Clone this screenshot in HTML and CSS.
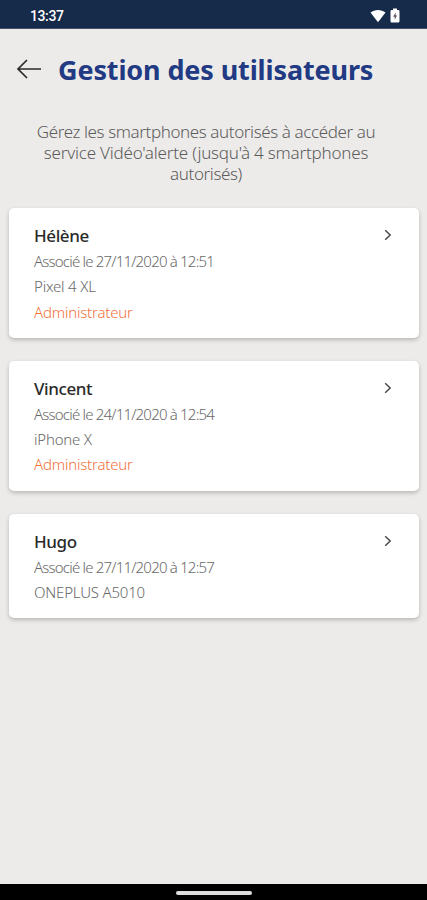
FILE: index.html
```html
<!DOCTYPE html>
<html lang="fr">
<head>
  <meta charset="UTF-8" />
  <meta name="viewport" content="width=device-width, initial-scale=1.0" />
  <title>Gestion des utilisateurs</title>
  <link rel="stylesheet" href="styles.css">
</head>
<body>
  <div class="status-bar">
    <span class="time">13:37</span>
    <div class="status-icons">
      <svg width="16" height="14" viewBox="0 0 16 14"><path d="M0.5 3.6C4.8 0 11.2 0 15.5 3.6L8 13.2Z" fill="#fff"/></svg>
      <svg width="10" height="15" viewBox="0 0 10 15"><path d="M3 0.5h4v1.5h1.2q1.3 0 1.3 1.3v9.9q0 1.3-1.3 1.3H1.8q-1.3 0-1.3-1.3V3.3Q0.5 2 1.8 2H3z" fill="#fff"/><path d="M5.6 4.5L3.2 8.8h1.5v3L7 7.6H5.6z" fill="#5c5560"/></svg>
    </div>
  </div>

  <header class="header">
    <a class="back" href="#" aria-label="Retour">
      <svg width="26" height="22" viewBox="0 0 26 22" fill="none" stroke="#2b2b2b" stroke-width="1.7"><path d="M25 11H2M11 2L2 11L11 20"/></svg>
    </a>
    <h1>Gestion des utilisateurs</h1>
  </header>

  <p class="intro">
    <span class="intro-line first">Gérez les smartphones autorisés à accéder au</span>
    <span class="intro-line second">service Vidéo'alerte (jusqu'à 4 smartphones</span>
    <span class="intro-line third">autorisés)</span>
  </p>

  <main class="users">
    <a class="card" href="#">
      <div class="info">
        <h2>Hélène</h2>
        <p class="date">Associé le 27/11/2020 à 12:51</p>
        <p class="device">Pixel 4 XL</p>
        <p class="role">Administrateur</p>
      </div>
      <svg class="chevron" width="8" height="12" viewBox="0 0 8 12"><path d="M1.2 1.2L6.2 6L1.2 10.8"/></svg>
    </a>

    <a class="card" href="#">
      <div class="info">
        <h2>Vincent</h2>
        <p class="date">Associé le 24/11/2020 à 12:54</p>
        <p class="device">iPhone X</p>
        <p class="role">Administrateur</p>
      </div>
      <svg class="chevron" width="8" height="12" viewBox="0 0 8 12"><path d="M1.2 1.2L6.2 6L1.2 10.8"/></svg>
    </a>

    <a class="card" href="#">
      <div class="info">
        <h2>Hugo</h2>
        <p class="date">Associé le 27/11/2020 à 12:57</p>
        <p class="device">ONEPLUS A5010</p>
      </div>
      <svg class="chevron" width="8" height="12" viewBox="0 0 8 12"><path d="M1.2 1.2L6.2 6L1.2 10.8"/></svg>
    </a>
  </main>

  <footer class="nav-bar">
    <div class="nav-handle"></div>
  </footer>
</body>
</html>
```

FILE: styles.css
```css
* {
  box-sizing: border-box;
}
body {
  margin: 0;
  height: 900px;
  display: flex;
  flex-direction: column;
  background: #ecebe9;
  font-family: "Noto Sans", "Open Sans", sans-serif;
  overflow: hidden;
}
h1, h2, p {
  margin: 0;
}
.status-bar {
  height: 29px;
  display: flex;
  justify-content: space-between;
  align-items: center;
  padding: 3px 27px 0 30px;
  background: #162a49;
  border-bottom: 1px solid #4a5068;
}
.time {
  font-family: Roboto, sans-serif;
  font-size: 14px;
  font-weight: 500;
  letter-spacing: -0.4px;
  color: #fff;
}
.status-icons {
  display: flex;
  align-items: center;
  gap: 4px;
}
.header {
  display: flex;
  align-items: center;
  height: 80px;
  padding-left: 16px;
}
.back {
  display: flex;
  margin-right: 16px;
}
.header h1 {
  padding-top: 1px;
  font-size: 27px;
  font-weight: 700;
  line-height: 36px;
  letter-spacing: -0.13px;
  color: #213a83;
  white-space: nowrap;
}
.intro {
  margin-top: 12px;
  padding-right: 15px;
  text-align: center;
  font-size: 17px;
  font-weight: 300;
  line-height: 21px;
  letter-spacing: -0.4px;
  color: #5c5c5c;
}
.intro-line {
  display: block;
  white-space: nowrap;
}
.intro-line.second {
  letter-spacing: -0.2px;
}
.users {
  flex: 1;
  display: flex;
  flex-direction: column;
  gap: 23px;
  padding: 24px 8px 0 9px;
}
.card {
  display: flex;
  justify-content: space-between;
  padding: 14px 27px 13px 25px;
  background: #fff;
  border-radius: 5px;
  box-shadow: 0 2px 4px rgba(0, 0, 0, 0.22);
  text-decoration: none;
}
.info h2 {
  font-size: 17px;
  font-weight: 500;
  line-height: 27px;
  letter-spacing: -0.4px;
  color: #2a2a2a;
}
.info p {
  font-size: 15px;
  font-weight: 300;
  line-height: 25.3px;
  letter-spacing: -0.2px;
  color: #686868;
  white-space: nowrap;
}
.info .date {
  letter-spacing: -0.8px;
}
.info .role {
  color: #f0703a;
}
.chevron {
  margin-top: 7px;
  fill: none;
  stroke: #444;
  stroke-width: 1.4;
}
.nav-bar {
  height: 16px;
  display: flex;
  justify-content: center;
  padding-top: 7px;
  background: #000;
}
.nav-handle {
  width: 76px;
  height: 4px;
  border-radius: 2px;
  background: #ddd;
}
```
